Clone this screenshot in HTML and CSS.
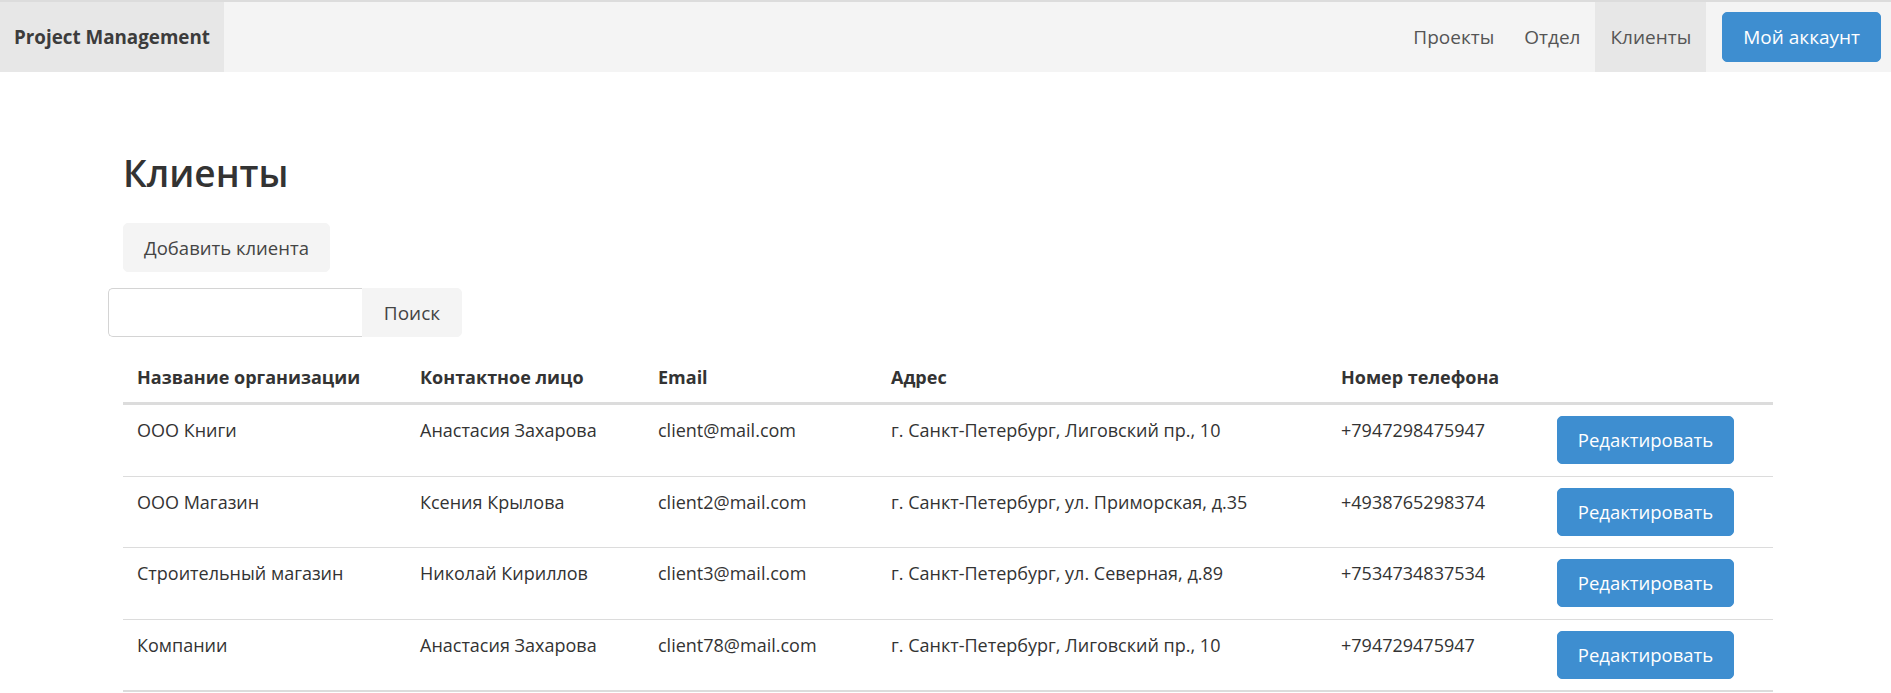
FILE: index.html
```html
<!DOCTYPE html>
<html lang="ru">
<head>
<meta charset="utf-8">
<title>Клиенты</title>
<link rel="stylesheet" href="styles.css">
</head>
<body>
<nav class="navbar">
  <a class="brand" href="#">Project Management</a>
  <div class="nav-right">
    <a class="nav-link" href="#">Проекты</a>
    <a class="nav-link" href="#">Отдел</a>
    <a class="nav-link active" href="#">Клиенты</a>
    <button class="btn btn-primary nav-btn">Мой аккаунт</button>
  </div>
</nav>
<main class="container">
  <h1 class="title">Клиенты</h1>
  <button class="btn btn-light add-btn">Добавить клиента</button>
  <form class="search">
    <input class="search-input" type="text">
    <button class="btn btn-light search-btn" type="button">Поиск</button>
  </form>
  <table class="table">
    <colgroup>
      <col class="c1"><col class="c2"><col class="c3"><col class="c4"><col class="c5"><col class="c6">
    </colgroup>
    <thead>
      <tr>
        <th>Название организации</th>
        <th>Контактное лицо</th>
        <th>Email</th>
        <th>Адрес</th>
        <th>Номер телефона</th>
        <th></th>
      </tr>
    </thead>
    <tbody>
      <tr>
        <td>ООО Книги</td>
        <td>Анастасия Захарова</td>
        <td>client@mail.com</td>
        <td>г. Санкт-Петербург, Лиговский пр., 10</td>
        <td>+7947298475947</td>
        <td><button class="btn btn-primary">Редактировать</button></td>
      </tr>
      <tr>
        <td>ООО Магазин</td>
        <td>Ксения Крылова</td>
        <td>client2@mail.com</td>
        <td>г. Санкт-Петербург, ул. Приморская, д.35</td>
        <td>+4938765298374</td>
        <td><button class="btn btn-primary">Редактировать</button></td>
      </tr>
      <tr>
        <td>Строительный магазин</td>
        <td>Николай Кириллов</td>
        <td>client3@mail.com</td>
        <td>г. Санкт-Петербург, ул. Северная, д.89</td>
        <td>+7534734837534</td>
        <td><button class="btn btn-primary">Редактировать</button></td>
      </tr>
      <tr>
        <td>Компании</td>
        <td>Анастасия Захарова</td>
        <td>client78@mail.com</td>
        <td>г. Санкт-Петербург, Лиговский пр., 10</td>
        <td>+794729475947</td>
        <td><button class="btn btn-primary">Редактировать</button></td>
      </tr>
    </tbody>
  </table>
</main>
</body>
</html>
```

FILE: styles.css
```css
* { box-sizing: border-box; }
html, body { margin: 0; padding: 0; }
body {
  font-family: "Open Sans", "Noto Sans", sans-serif;
  font-size: 18px;
  line-height: 28px;
  color: #333;
  background: #fff;
}
.navbar {
  display: flex;
  justify-content: space-between;
  align-items: stretch;
  height: 72px;
  background: #f4f4f4;
  border-top: 2px solid #dcdcdc;
}
.brand {
  display: flex;
  align-items: center;
  padding: 0 14px;
  width: 224px;
  background: #e7e7e7;
  color: #3c3c3c;
  font-weight: 700;
  font-size: 18.8px;
  text-decoration: none;
}
.nav-right {
  display: flex;
  align-items: stretch;
  padding-right: 10px;
}
.nav-link {
  display: flex;
  align-items: center;
  padding: 0 15px;
  color: #555;
  font-size: 19px;
  text-decoration: none;
}
.nav-link.active { background: #e7e7e7; }
.btn {
  font-family: inherit;
  font-size: 18.5px;
  line-height: 28px;
  border: 1px solid transparent;
  border-radius: 5px;
  padding: 10px 16px;
  cursor: pointer;
}
.btn-primary {
  background: #3e8ed0;
  border-color: #3e8ed0;
  color: #fff;
}
.btn-light {
  background: #f4f4f4;
  border-color: #f4f4f4;
  color: #444;
}
.nav-btn {
  align-self: center;
  margin-left: 16px;
  height: 50px;
  padding: 0 20px;
  font-size: 19px;
}
.container {
  width: 1650px;
  margin: 0 0 0 123px;
}
.title {
  margin: 73px 0 0;
  font-size: 37px;
  line-height: 56px;
  font-weight: 600;
  color: #333;
}
.add-btn {
  margin-top: 22px;
  height: 49px;
  width: 207px;
  padding: 0;
}
.search {
  display: flex;
  margin: 16px 0 0 -15px;
}
.search-input {
  width: 254px;
  height: 49px;
  border: 1px solid #d4d4d4;
  border-right: none;
  border-radius: 5px 0 0 5px;
  font-family: inherit;
  font-size: 18px;
  padding: 0 12px;
}
.search-btn {
  width: 100px;
  height: 49px;
  padding: 0;
  border-radius: 0 5px 5px 0;
  font-size: 19px;
}
.table {
  width: 1650px;
  margin-top: 15px;
  border-collapse: collapse;
  table-layout: fixed;
}
.c1 { width: 283px; }
.c2 { width: 238px; }
.c3 { width: 233px; }
.c4 { width: 450px; }
.c5 { width: 216px; }
.c6 { width: 230px; }
.table th,
.table td {
  text-align: left;
  vertical-align: top;
  padding: 11px 14px;
  white-space: nowrap;
}
.table td { padding: 11px 14px 11.5px; }
.table th {
  font-weight: 700;
  border-bottom: 3px solid #dcdcdc;
}
.table td {
  border-bottom: 1px solid #dcdcdc;
}
.table tbody tr:last-child td {
  border-bottom: 2px solid #dcdcdc;
}
.table td .btn {
  height: 48px;
  width: 177px;
  padding: 0;
}
```
